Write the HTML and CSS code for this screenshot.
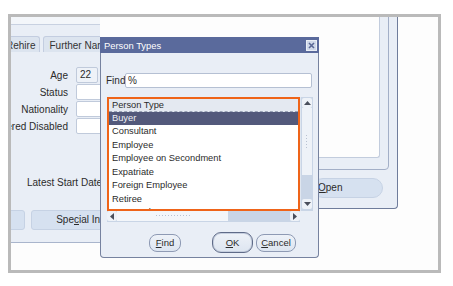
FILE: index.html
```html
<!DOCTYPE html>
<html lang="en">
<head>
    <meta charset="UTF-8">
    <title>Person Types</title>
    <link rel="stylesheet" href="styles.css">
</head>
<body>
    <div class="frame">
        <!-- main people window, mostly hidden behind the dialog -->
        <div class="win win-main">
            <div class="topbar"></div>
            <div class="tabs">
                <span class="tab tab-first">Rehire</span>
                <span class="tab">Further Name</span>
            </div>
            <div class="fields">
                <label>Age</label><span class="input input-short">22</span>
                <label>Status</label><span class="input"></span>
                <label>Nationality</label><span class="input"></span>
                <label>Registered Disabled</label><span class="input"></span>
            </div>
            <div class="latest">Latest Start Date</div>
            <div class="btn-row">
                <span class="btn btn-cut"></span>
                <span class="btn btn-special">Spe<u>c</u>ial Information</span>
            </div>
        </div>

        <!-- window on the right -->
        <div class="win win-right">
            <div class="pane">
                <div class="whitebox"></div>
            </div>
            <div class="btn btn-open"><u>O</u>pen</div>
        </div>

        <!-- list of values dialog -->
        <div class="dialog">
            <div class="titlebar">
                <span>Person Types</span>
                <svg class="close" width="11" height="11" viewBox="0 0 11 11">
                    <rect x="0.5" y="0.5" width="10" height="10" fill="#cfd8e9" stroke="#e9eef6"/>
                    <path d="M3 3 L8 8 M8 3 L3 8" stroke="#5a6896" stroke-width="1.6"/>
                </svg>
            </div>
            <div class="find-row">
                <span class="find-label">Find</span>
                <span class="find-input">%</span>
            </div>
            <div class="lov">
                <div class="lov-list">
                    <div class="lov-head">Person Type</div>
                    <div class="lov-row selected">Buyer</div>
                    <div class="lov-row">Consultant</div>
                    <div class="lov-row">Employee</div>
                    <div class="lov-row">Employee on Secondment</div>
                    <div class="lov-row">Expatriate</div>
                    <div class="lov-row">Foreign Employee</div>
                    <div class="lov-row">Retiree</div>
                    <div class="lov-row">Seasonal</div>
                </div>
                <div class="vscroll">
                    <span class="arrow">
                        <svg width="7" height="4" viewBox="0 0 7 4"><path d="M0 4 L3.5 0 L7 4 Z" fill="#4a4f5c"/></svg>
                    </span>
                    <span class="vthumb"><span class="grip-v"></span></span>
                    <span class="vtrack"></span>
                    <span class="arrow">
                        <svg width="7" height="4" viewBox="0 0 7 4"><path d="M0 0 L3.5 4 L7 0 Z" fill="#4a4f5c"/></svg>
                    </span>
                </div>
                <div class="hscroll">
                    <span class="arrow">
                        <svg width="4" height="7" viewBox="0 0 4 7"><path d="M4 0 L0 3.5 L4 7 Z" fill="#4a4f5c"/></svg>
                    </span>
                    <span class="hthumb"><span class="grip-h"></span></span>
                    <span class="htrack"></span>
                    <span class="arrow">
                        <svg width="4" height="7" viewBox="0 0 4 7"><path d="M0 0 L4 3.5 L0 7 Z" fill="#4a4f5c"/></svg>
                    </span>
                </div>
                <div class="corner"></div>
            </div>
            <div class="dlg-buttons">
                <span class="pill pill-find"><u>F</u>ind</span>
                <span class="pill pill-ok"><u>O</u>K</span>
                <span class="pill pill-cancel"><u>C</u>ancel</span>
            </div>
        </div>
    </div>
</body>
</html>
```

FILE: styles.css
```css
* {
    box-sizing: border-box;
}

body {
    margin: 0;
    background: #ffffff;
    font-family: "Liberation Sans", Arial, sans-serif;
    font-size: 10px;
    color: #2b2b2b;
}

u {
    text-decoration: underline;
    text-underline-offset: 1px;
}

.frame {
    position: relative;
    margin: 14px 0 0 8px;
    width: 433px;
    height: 259px;
    border: 3px solid #bababa;
    background: #fdfdfd;
    overflow: hidden;
}

.win {
    position: absolute;
    background: #e9eef6;
    overflow: hidden;
}

/* main window (only the part left of the dialog shows) */
.win-main {
    left: 0;
    top: 0;
    width: 89px;
    height: 226px;
    border-bottom: 1px solid #a9b5cc;
}

.topbar {
    height: 8px;
    background: #f3f6fa;
    border-bottom: 1px solid #c8d1e1;
}

.tabs {
    display: flex;
    gap: 3px;
    margin: 11px 0 0 -10px;
    height: 16px;
}

.tab {
    flex: none;
    background: #dce4ef;
    border: 1px solid #c3cde0;
    border-bottom: none;
    border-radius: 3px 3px 0 0;
    padding: 2px 4px 0 5px;
    line-height: 13px;
    white-space: nowrap;
    color: #333;
}

.tab-first {
    padding-left: 4px;
}

.fields {
    display: grid;
    grid-template-columns: 57px 1fr;
    column-gap: 8px;
    row-gap: 1px;
    margin-top: 15px;
}

.fields label {
    display: flex;
    justify-content: flex-end;
    align-items: center;
    height: 16px;
    white-space: nowrap;
}

.input {
    display: block;
    height: 16px;
    width: 70px;
    background: #ffffff;
    border: 1px solid #c0cadb;
    border-radius: 2px;
    padding-left: 3px;
    line-height: 14px;
}

.input-short {
    width: 22px;
    background: #eef2f8;
}

.latest {
    margin: 42px 0 0 16px;
    height: 14px;
    line-height: 14px;
    white-space: nowrap;
}

.btn-row {
    display: flex;
    gap: 6px;
    margin: 20px 0 0 -6px;
}

.btn {
    flex: none;
    height: 20px;
    background: #d6e1f0;
    border: 1px solid #c6d2e4;
    border-radius: 3px;
    line-height: 18px;
    white-space: nowrap;
}

.btn-cut {
    width: 20px;
}

.btn-special {
    width: 136px;
    text-align: center;
}

/* right window (only the part right of the dialog shows) */
.win-right {
    left: 307px;
    top: 0;
    width: 80px;
    height: 192px;
    border-right: 1px solid #6f7c9b;
    border-bottom: 1px solid #6f7c9b;
    border-bottom-right-radius: 4px;
}

.pane {
    margin: -2px 8px 0 -4px;
    height: 155px;
    padding: 0 8px 11px 0;
    border: 1px solid #a3afc7;
    border-radius: 0 0 4px 0;
}

.whitebox {
    height: 100%;
    background: #fdfdfd;
    border: 1px solid #c2ccdd;
    border-top: none;
    border-radius: 0 0 3px 0;
}

.btn-open {
    margin: 8px 0 0 -5px;
    width: 70px;
    height: 20px;
    border-radius: 10px;
    padding-left: 4px;
    line-height: 18px;
}

/* dialog */
.dialog {
    position: absolute;
    left: 89px;
    top: 20px;
    width: 219px;
    height: 221px;
    background: #e9eef6;
    border: 1px solid #76829f;
    border-top: none;
    border-radius: 0 0 4px 4px;
}

.titlebar {
    display: flex;
    justify-content: space-between;
    align-items: center;
    height: 16px;
    margin: 0 -1px;
    padding: 0 2px 0 4px;
    background: #5a6a9c;
    color: #ffffff;
    font-size: 9.4px;
}

.find-row {
    display: flex;
    align-items: center;
    margin: 20px 0 0 5px;
}

.find-label {
    width: 19px;
}

.find-input {
    width: 187px;
    height: 15px;
    background: #ffffff;
    border: 1px solid #b5c0d3;
    border-radius: 2px;
    padding-left: 2px;
    line-height: 13px;
}

.lov {
    display: grid;
    grid-template-columns: 193px 13px;
    grid-template-rows: 114px 11px;
    margin: 9px 0 0 6px;
    width: 206px;
    font-size: 9.3px;
}

.lov-list {
    background: #ffffff;
    border: 2px solid #ef6419;
    overflow: hidden;
}

.lov-head {
    height: 13px;
    padding-left: 3px;
    line-height: 12px;
    background: #e4e9f1;
    border-bottom: 1px dashed #9aa3b6;
}

.lov-row {
    height: 13.5px;
    line-height: 13.5px;
    padding-left: 3px;
    white-space: nowrap;
}

.lov-row.selected {
    height: 13px;
    line-height: 13px;
    background: #53597b;
    color: #eef0f6;
}

.vscroll {
    display: flex;
    flex-direction: column;
    background: #c9d5e6;
    border-left: 1px solid #dfe6f0;
    padding: 1px 1px 2px 1px;
}

.arrow {
    display: flex;
    align-items: center;
    justify-content: center;
    flex: none;
    width: 10px;
    height: 10px;
    background: #eef2f8;
    border-radius: 2px;
}

.vthumb {
    display: flex;
    align-items: center;
    justify-content: center;
    height: 67px;
    background: #eef2f8;
}

.grip-v {
    width: 4px;
    height: 16px;
    background-image: radial-gradient(circle, #b9c2d2 0.7px, transparent 0.9px);
    background-size: 3px 3px;
}

.vtrack {
    flex: 1;
}

.hscroll {
    display: flex;
    background: #c9d5e6;
    padding: 0 0 1px 0;
}

.hthumb {
    display: flex;
    align-items: center;
    justify-content: center;
    width: 111px;
    background: #f3f6fa;
}

.grip-h {
    width: 36px;
    height: 4px;
    background-image: radial-gradient(circle, #b9c2d2 0.7px, transparent 0.9px);
    background-size: 3px 3px;
}

.htrack {
    flex: 1;
}

.corner {
    background: #e9eef6;
}

.dlg-buttons {
    display: flex;
    align-items: center;
    margin: 10px 0 0 48px;
    font-size: 9.5px;
}

.pill {
    height: 18px;
    line-height: 16px;
    text-align: center;
    background: linear-gradient(to bottom, #eef2f8, #dde5f0);
    border: 1px solid #8e9ab4;
    border-radius: 8px;
}

.pill-find {
    width: 32px;
}

.pill-ok {
    width: 41px;
    height: 21px;
    line-height: 19px;
    margin-left: 31px;
    border: 1px solid #5f6b88;
    box-shadow: inset 0 0 0 1px #c6cfdf;
    border-radius: 9px;
}

.pill-cancel {
    width: 40px;
    margin-left: 3px;
}
```
